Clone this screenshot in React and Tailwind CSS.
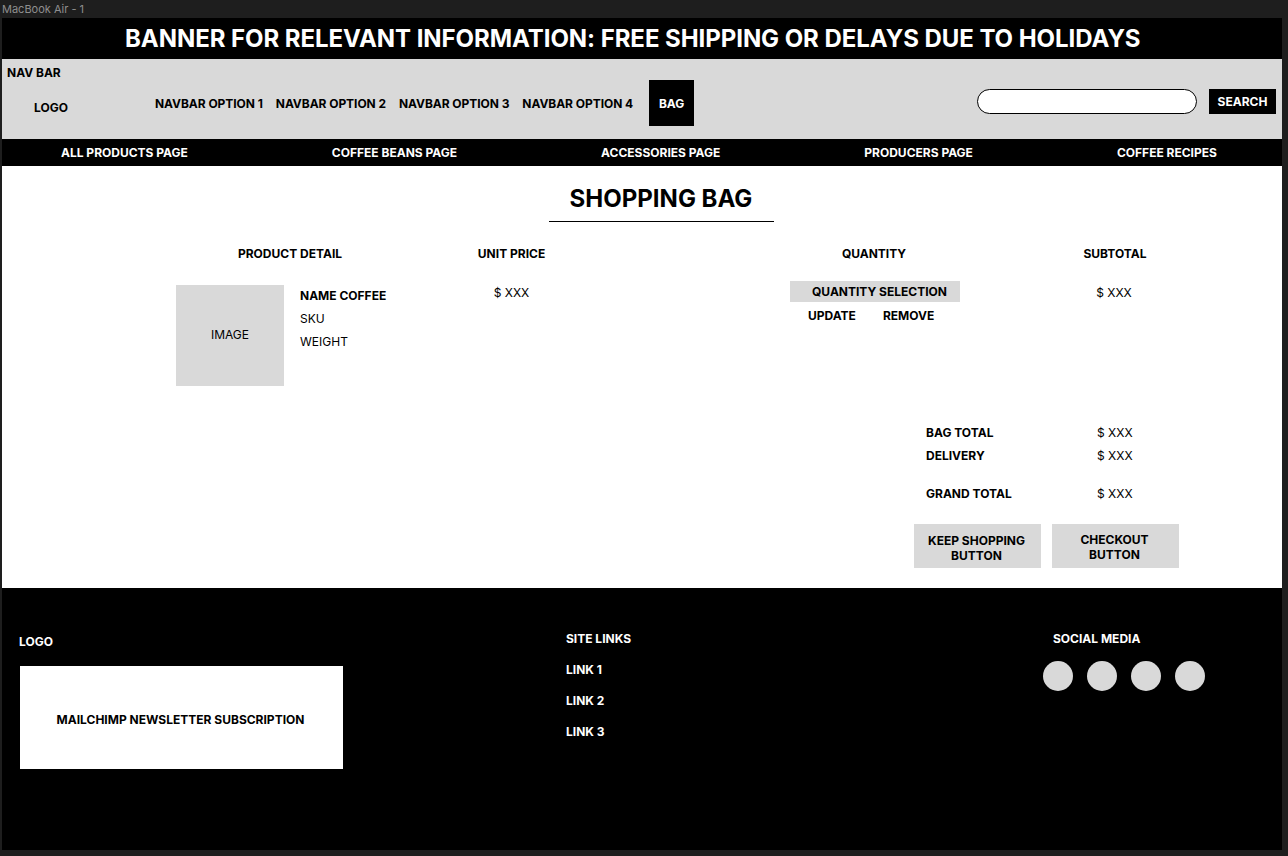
import React from "react";

const F = { fontFamily: "Inter, 'Liberation Sans', sans-serif" };

export default function App() {
  const navOpts = ["NAVBAR OPTION 1", "NAVBAR OPTION 2", "NAVBAR OPTION 3", "NAVBAR OPTION 4"];
  const subNav = ["ALL PRODUCTS PAGE", "COFFEE BEANS PAGE", "ACCESSORIES PAGE", "PRODUCERS PAGE", "COFFEE RECIPES"];
  return (
    <div style={F} className="w-[1288px] h-[856px] bg-[#1e1e1e] overflow-hidden">
      <div className="h-[18px] pl-[2px] text-[11px] leading-[18px] text-[#8e8e8e]">MacBook Air - 1</div>
      <div className="ml-[2px] w-[1280px] h-[832px] bg-white flex flex-col">
        {/* Banner */}
        <div className="h-[41px] bg-black flex items-center pl-[123px] text-white text-[24px] font-bold leading-[29px] tracking-[-0.06px] whitespace-nowrap">
          BANNER FOR RELEVANT INFORMATION: FREE SHIPPING OR DELAYS DUE TO HOLIDAYS
        </div>
        {/* Nav bar */}
        <div className="h-[80px] bg-[#d9d9d9] flex flex-col">
          <div className="pl-[5px] pt-[6px] text-[12px] leading-[15px] font-bold text-black">NAV BAR</div>
          <div className="h-[46px] flex items-center text-[12px] leading-[15px] font-bold text-black">
            <div className="pl-[32px] w-[153px] mt-[8px]">LOGO</div>
            <div className="flex gap-[13px] tracking-[-0.05px]">
              {navOpts.map((o) => (
                <span key={o} className="whitespace-nowrap">{o}</span>
              ))}
            </div>
            <div className="ml-[16px] w-[45px] h-[46px] bg-black text-white flex items-center justify-center">BAG</div>
            <div className="flex-1" />
            <div className="w-[220px] h-[25px] rounded-full bg-white border border-black mt-[-3px]" />
            <div className="ml-[12px] mr-[6px] w-[67px] h-[25px] bg-black text-white flex items-center justify-center mt-[-3px]">SEARCH</div>
          </div>
        </div>
        {/* Sub nav */}
        <div className="h-[27px] bg-black flex items-center pl-[59px] gap-[144px] text-white text-[12px] leading-[15px] font-bold">
          {subNav.map((s) => (
            <span key={s} className="whitespace-nowrap">{s}</span>
          ))}
        </div>
        {/* Main */}
        <div className="h-[422px] bg-white flex flex-col text-black text-[12px] leading-[15px]">
          <div className="flex flex-col items-center pt-[18px] ml-[38px]">
            <div className="text-[24px] leading-[29px] font-bold">SHOPPING BAG</div>
            <div className="mt-[8px] w-[225px] h-px bg-black" />
          </div>
          {/* header row */}
          <div className="flex pl-[174px] mt-[24px] font-bold">
            <div className="w-[228px] text-center">PRODUCT DETAIL</div>
            <div className="w-[215px] text-center">UNIT PRICE</div>
            <div className="w-[171px]" />
            <div className="w-[170px] text-center pr-[2px]">QUANTITY</div>
            <div className="w-[90px]" />
            <div className="w-[130px] text-center">SUBTOTAL</div>
          </div>
          {/* item row */}
          <div className="flex pl-[174px] mt-[20px]">
            <div className="w-[228px] flex pt-[4px]">
              <div className="w-[108px] h-[101px] bg-[#d9d9d9] flex items-center justify-center pb-[2px]">IMAGE</div>
              <div className="ml-[16px] pt-[3px] flex flex-col gap-[8px]">
                <span className="font-bold">NAME COFFEE</span>
                <span>SKU</span>
                <span>WEIGHT</span>
              </div>
            </div>
            <div className="w-[215px] text-center pt-[4px]">$ XXX</div>
            <div className="w-[171px]" />
            <div className="w-[170px] flex flex-col">
              <div className="h-[21px] bg-[#d9d9d9] flex items-center justify-center pl-[9px] font-bold whitespace-nowrap">QUANTITY SELECTION</div>
              <div className="mt-[6px] pl-[18px] flex gap-[27px] font-bold">
                <span>UPDATE</span>
                <span>REMOVE</span>
              </div>
            </div>
            <div className="w-[90px]" />
            <div className="w-[130px] text-center pt-[4px] pr-[2px]">$ XXX</div>
          </div>
          {/* totals */}
          <div className="ml-[912px] w-[265px] mt-[39px] flex flex-col">
            <div className="flex pl-[12px]">
              <span className="w-[171px] font-bold">BAG TOTAL</span>
              <span>$ XXX</span>
            </div>
            <div className="flex pl-[12px] mt-[8px]">
              <span className="w-[171px] font-bold">DELIVERY</span>
              <span>$ XXX</span>
            </div>
            <div className="flex pl-[12px] mt-[23px]">
              <span className="w-[171px] font-bold">GRAND TOTAL</span>
              <span>$ XXX</span>
            </div>
            <div className="flex gap-[11px] mt-[23px] font-bold">
              <div className="w-[127px] h-[44px] bg-[#d9d9d9] flex items-center justify-center text-center pt-[4px] pr-[2px]">
                KEEP SHOPPING<br />BUTTON
              </div>
              <div className="w-[127px] h-[44px] bg-[#d9d9d9] flex items-center justify-center text-center pt-[2px] pr-[2px]">
                CHECKOUT<br />BUTTON
              </div>
            </div>
          </div>
        </div>
        {/* Footer */}
        <div className="flex-1 bg-black text-white text-[12px] leading-[15px] font-bold flex pt-[43px]">
          <div className="w-[564px] pl-[17px] flex flex-col">
            <div className="mt-[3px]">LOGO</div>
            <div className="ml-[1px] mt-[17px] w-[323px] h-[103px] bg-white text-black flex items-center justify-center pt-[4px] pr-[2px]">
              MAILCHIMP NEWSLETTER SUBSCRIPTION
            </div>
          </div>
          <div className="w-[477px] flex flex-col gap-[16px]">
            <span>SITE LINKS</span>
            <span>LINK 1</span>
            <span>LINK 2</span>
            <span>LINK 3</span>
          </div>
          <div className="flex flex-col">
            <span className="pl-[10px]">SOCIAL MEDIA</span>
            <div className="mt-[15px] flex gap-[14px]">
              <div className="w-[30px] h-[30px] rounded-full bg-[#d9d9d9]" />
              <div className="w-[30px] h-[30px] rounded-full bg-[#d9d9d9]" />
              <div className="w-[30px] h-[30px] rounded-full bg-[#d9d9d9]" />
              <div className="w-[30px] h-[30px] rounded-full bg-[#d9d9d9]" />
            </div>
          </div>
        </div>
      </div>
    </div>
  );
}
